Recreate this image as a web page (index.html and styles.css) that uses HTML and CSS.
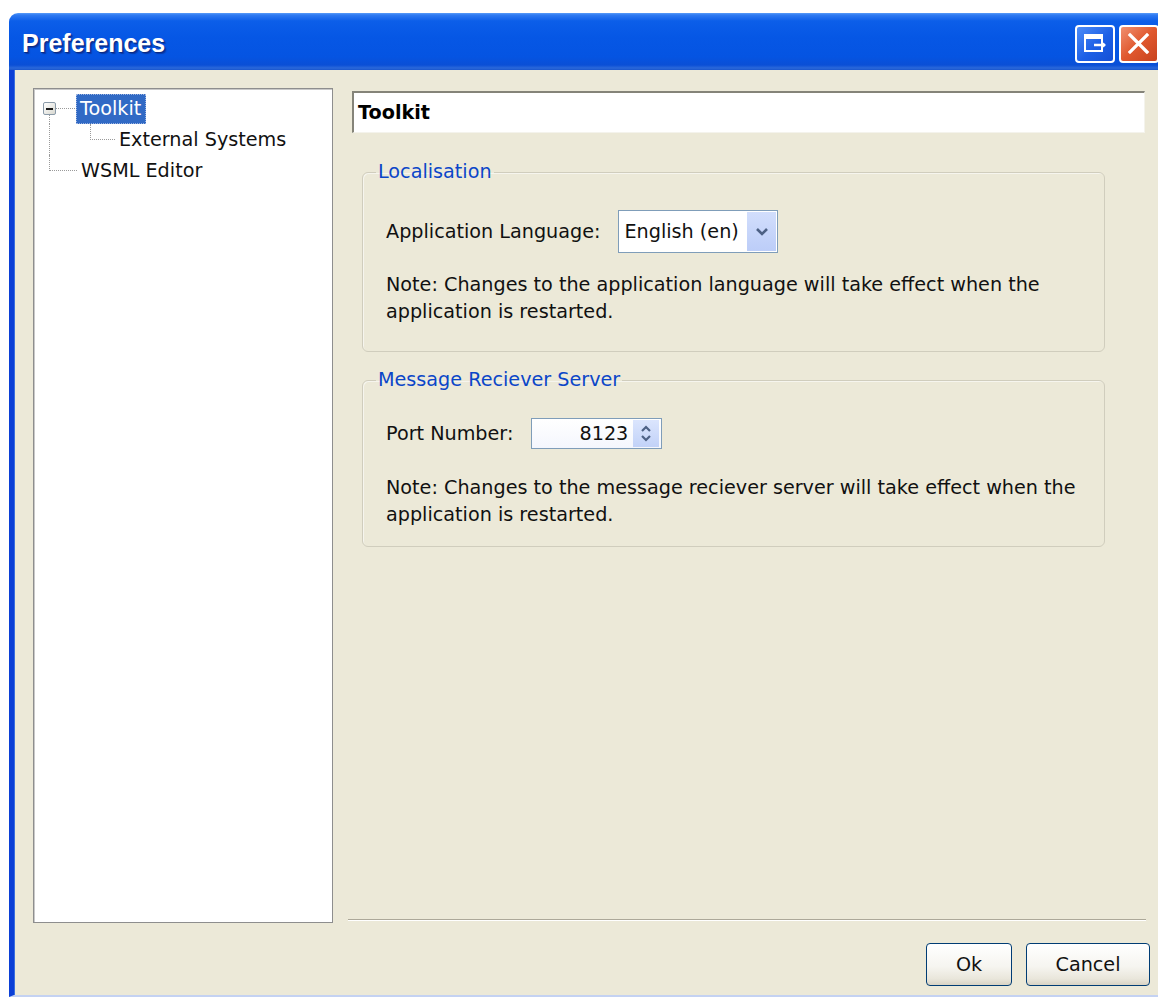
FILE: index.html
```html
<!DOCTYPE html>
<html lang="en">
<head>
<meta charset="utf-8">
<title>Preferences</title>
<link rel="stylesheet" href="styles.css">
</head>
<body>
<div class="window">
  <div class="titlebar">
    <span class="title">Preferences</span>
    <div class="caption-buttons">
      <span class="cap-btn cap-max">
        <svg width="40" height="38" viewBox="0 0 40 38">
          <rect x="10" y="10" width="17" height="16" fill="none" stroke="#fff" stroke-width="2"/>
          <rect x="10" y="10" width="17" height="4" fill="#fff"/>
          <path d="M19 20 H30" stroke="#fff" stroke-width="2.4" fill="none"/>
          <path d="M27 16.5 L31 20 L27 23.5 Z" fill="#fff"/>
        </svg>
      </span>
      <span class="cap-btn cap-close">
        <svg width="40" height="38" viewBox="0 0 40 38">
          <path d="M11 10 L28 27 M28 10 L11 27" stroke="#fff" stroke-width="3.2" stroke-linecap="square" fill="none"/>
        </svg>
      </span>
    </div>
  </div>
  <div class="client">
    <div class="main">
      <div class="tree">
        <div class="tree-row row-root">
          <span class="expander"><span class="minus"></span></span>
          <span class="hline hline-root"></span>
          <span class="node node-selected">Toolkit</span>
        </div>
        <div class="tree-row row-child">
          <span class="hline hline-child"></span>
          <span class="node">External Systems</span>
        </div>
        <div class="tree-row row-last">
          <span class="hline hline-last"></span>
          <span class="node">WSML Editor</span>
        </div>
      </div>
      <div class="panel">
        <div class="panel-header">Toolkit</div>
        <fieldset class="group group-locale">
          <legend>Localisation</legend>
          <div class="field-row row-locale">
            <span class="field-label">Application Language:</span>
            <div class="combo">
              <span class="combo-text">English (en)</span>
              <span class="combo-btn">
                <svg width="30" height="39" viewBox="0 0 30 39">
                  <path d="M10 17 L15 22 L20 17" stroke="#4d6185" stroke-width="2.6" fill="none"/>
                </svg>
              </span>
            </div>
          </div>
          <p class="note note-locale">Note: Changes to the application language will take effect when the<br>application is restarted.</p>
        </fieldset>
        <fieldset class="group group-server">
          <legend>Message Reciever Server</legend>
          <div class="field-row row-server">
            <span class="field-label">Port Number:</span>
            <div class="spinner">
              <span class="spinner-text">8123</span>
              <span class="spinner-btn">
                <svg width="26" height="27" viewBox="0 0 26 27">
                  <path d="M9 11 L13 7 L17 11" stroke="#4d6185" stroke-width="2.2" fill="none"/>
                  <path d="M9 16 L13 20 L17 16" stroke="#4d6185" stroke-width="2.2" fill="none"/>
                </svg>
              </span>
            </div>
          </div>
          <p class="note note-server">Note: Changes to the message reciever server will take effect when the<br>application is restarted.</p>
        </fieldset>
        <div class="separator"></div>
      </div>
    </div>
    <div class="actions">
      <button class="btn btn-ok">Ok</button>
      <button class="btn btn-cancel">Cancel</button>
    </div>
  </div>
</div>
</body>
</html>
```
FILE: styles.css
```css
html, body {
  margin: 0;
  padding: 0;
  background: #ffffff;
  overflow: hidden;
}

body {
  font-family: "DejaVu Sans", "Liberation Sans", sans-serif;
  font-size: 19.2px;
  color: #111;
}

/* window frame */
.window {
  margin: 13px 0 0 9px;
  width: 1149px;
  height: 984px;
  border-top-left-radius: 9px;
  overflow: hidden;
  display: flex;
  flex-direction: column;
}

.titlebar {
  height: 57px;
  flex: none;
  display: flex;
  align-items: center;
  justify-content: space-between;
  padding-left: 13px;
  background: linear-gradient(to bottom,
    #5a9cf8 0px, #2f7af2 2px, #0c5ee9 8px, #0657e5 24px,
    #0554e2 44px, #0a4fd6 52px, #2a68da 55px, #1a56cc 57px);
}

.title {
  font-family: "Liberation Sans", Arial, sans-serif;
  font-weight: bold;
  font-size: 25px;
  color: #ffffff;
  text-shadow: 1px 1px 0 #0b2a84, 2px 2px 1px rgba(10, 30, 110, 0.5);
  margin-top: 3px;
}

.caption-buttons {
  display: flex;
  gap: 4px;
  margin-right: -1px;
  margin-top: 5px;
}

.cap-btn {
  width: 40px;
  height: 38px;
  box-sizing: border-box;
  border: 2px solid #ffffff;
  border-radius: 4px;
  display: block;
  overflow: hidden;
}

.cap-btn svg {
  display: block;
  margin: -2px 0 0 -2px;
}

.cap-max {
  background: linear-gradient(to bottom right, #4d8cf7, #1c5fe6 55%, #1550d6);
}

.cap-close {
  background: linear-gradient(to bottom right, #f09070, #e0582e 50%, #c8421e);
}

/* client area */
.client {
  flex: 1;
  background: #ece9d8;
  border-left: 5px solid #0b3fd6;
  border-bottom: 2px solid #c4d2f2;
  box-shadow: inset 1px 0 0 #3a6fe0;
  display: flex;
  flex-direction: column;
}

.main {
  display: flex;
  padding: 18px 12px 0 19px;
  height: 835px;
}

/* navigation tree */
.tree {
  width: 300px;
  height: 835px;
  box-sizing: border-box;
  background: #ffffff;
  border: 1px solid #8e8e8e;
  box-shadow: inset 1px 1px 0 #c9c9c9;
  padding-top: 4px;
  flex: none;
}

.tree-row {
  position: relative;
  height: 31px;
  display: flex;
  align-items: center;
}

.tree-row::before {
  content: "";
  position: absolute;
  left: 15px;
  border-left: 1px dotted #9a9a9a;
}

.row-root::before {
  top: 22px;
  bottom: 0;
}

.row-child::before {
  top: 0;
  bottom: 0;
}

.row-last::before {
  top: 0;
  height: 16px;
}

.row-child::after {
  content: "";
  position: absolute;
  left: 56px;
  top: 0;
  height: 16px;
  border-left: 1px dotted #9a9a9a;
}

.expander {
  margin-left: 9px;
  width: 13px;
  height: 13px;
  box-sizing: border-box;
  border: 1px solid #8a9aa8;
  border-radius: 2px;
  background: linear-gradient(to bottom right, #ffffff, #d8d8d0);
  display: flex;
  align-items: center;
  justify-content: center;
}

.minus {
  width: 7px;
  height: 2px;
  background: #1a1a1a;
}

.hline {
  height: 0;
  border-top: 1px dotted #9a9a9a;
}

.hline-root {
  width: 19px;
  margin-left: 0;
}

.hline-child {
  margin-left: 56px;
  width: 25px;
}

.hline-last {
  margin-left: 15px;
  width: 28px;
}

.node {
  padding: 0 5px 0 4px;
  line-height: 30px;
  white-space: nowrap;
}

.node-selected {
  margin-left: 1px;
  background: #316ac5;
  color: #ffffff;
  outline: 1px dotted #9db4e0;
  outline-offset: -1px;
}

/* right-hand page */
.panel {
  width: 798px;
  margin-left: 15px;
  display: flex;
  flex-direction: column;
}

.panel-header {
  margin: 3px 1px 0 4px;
  height: 42px;
  box-sizing: border-box;
  background: #ffffff;
  border-top: 2px solid #858479;
  border-left: 2px solid #858479;
  border-right: 1px solid #f4f3ec;
  border-bottom: 1px solid #f4f3ec;
  padding-left: 4px;
  display: flex;
  align-items: center;
  font-weight: bold;
  color: #000;
}

.group {
  margin: 0 0 0 14px;
  width: 743px;
  min-width: 0;
  box-sizing: border-box;
  padding: 0;
  border: 1px solid #d0cdbd;
  border-radius: 6px;
  box-shadow: inset 1px 1px 0 #f6f5ee;
}

.group legend {
  margin-left: 13px;
  padding: 0 2px;
  line-height: 20px;
  color: #0b46c8;
}

.group-locale {
  margin-top: 29px;
  padding-bottom: 26px;
}

.group-server {
  margin-top: 18px;
  padding-bottom: 18px;
}

.field-row {
  display: flex;
  align-items: center;
  padding-left: 23px;
}

.row-locale {
  margin-top: 28px;
  height: 43px;
}

.row-server {
  margin-top: 28px;
  height: 31px;
}

.field-label {
  white-space: nowrap;
}

.combo {
  margin-left: 18px;
  width: 160px;
  height: 43px;
  box-sizing: border-box;
  border: 1px solid #7f9db9;
  background: #ffffff;
  display: flex;
  align-items: center;
  justify-content: space-between;
  padding: 1px;
}

.combo-text {
  padding-left: 4px;
  white-space: nowrap;
}

.combo-btn {
  width: 29px;
  height: 39px;
  background: linear-gradient(to bottom, #d2defc, #bccdf8);
}

.combo-btn svg,
.spinner-btn svg {
  display: block;
}

.spinner {
  margin-left: 18px;
  width: 131px;
  height: 31px;
  box-sizing: border-box;
  border: 1px solid #7f9db9;
  background: linear-gradient(to bottom, #ffffff, #f4f6fd);
  display: flex;
  align-items: center;
  justify-content: flex-end;
  padding: 1px 2px 1px 1px;
}

.spinner-text {
  padding-right: 5px;
}

.spinner-btn {
  width: 26px;
  height: 27px;
  background: linear-gradient(to bottom, #dbe5fd, #c2d2f8);
}

.note {
  margin: 0;
  padding-left: 23px;
  line-height: 27px;
  white-space: nowrap;
}

.note-locale {
  margin-top: 18px;
}

.note-server {
  margin-top: 25px;
}

.separator {
  margin-top: auto;
  margin-bottom: 2px;
  height: 0;
  border-top: 1px solid #aca899;
  border-bottom: 1px solid #ffffff;
}

/* dialog buttons */
.actions {
  display: flex;
  justify-content: flex-end;
  gap: 14px;
  margin-top: 20px;
  padding-right: 8px;
}

.btn {
  height: 43px;
  box-sizing: border-box;
  border: 1px solid #003c74;
  border-radius: 4px;
  background: linear-gradient(to bottom, #ffffff 0%, #f6f5f0 55%, #e9e6db 85%, #d8d3c4 100%);
  font-family: inherit;
  font-size: inherit;
  color: #111;
  padding: 0;
}

.btn-ok {
  width: 86px;
}

.btn-cancel {
  width: 124px;
}
```
